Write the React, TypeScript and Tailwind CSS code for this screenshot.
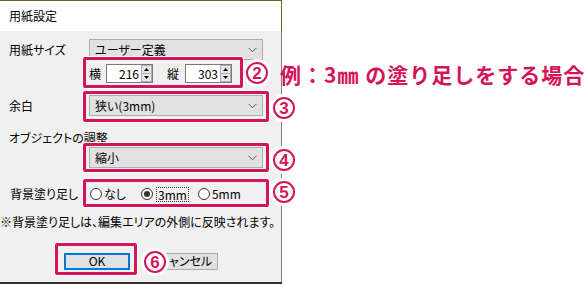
const MAG = "border-[#d4145a]";

function Chevron() {
  return (
    <svg width="9" height="6" viewBox="0 0 9 6">
      <polyline points="0.5,0.8 4.5,4.8 8.5,0.8" fill="none" stroke="#5a5a5a" strokeWidth="1" />
    </svg>
  );
}

function Select({ value }: { value: string }) {
  return (
    <div className="flex h-[21px] w-[174px] items-center justify-between border border-[#adadad] bg-[#e1e1e1] pl-[5px] pr-[5px]">
      <span className="leading-none">{value}</span>
      <Chevron />
    </div>
  );
}

function Spin({ value }: { value: string }) {
  return (
    <div className="flex h-[19px] w-[47px] border border-[#7a7a7a] bg-white">
      <div className="flex flex-1 items-center justify-end pr-[2px] leading-none">{value}</div>
      <div className="flex w-[11px] flex-col">
        <div className="flex flex-1 items-center justify-center border border-[#adadad] bg-[#e6e6e6]">
          <svg width="5" height="3" viewBox="0 0 5 3">
            <polygon points="2.5,0 5,3 0,3" fill="#000" />
          </svg>
        </div>
        <div className="flex flex-1 items-center justify-center border border-t-0 border-[#adadad] bg-[#e6e6e6]">
          <svg width="5" height="3" viewBox="0 0 5 3">
            <polygon points="0,0 5,0 2.5,3" fill="#000" />
          </svg>
        </div>
      </div>
    </div>
  );
}

function Radio({ checked }: { checked?: boolean }) {
  return (
    <span className="flex h-[12px] w-[12px] shrink-0 items-center justify-center rounded-full border border-[#333] bg-white">
      {checked && <span className="h-[6px] w-[6px] rounded-full bg-[#333]" />}
    </span>
  );
}

function Num({ n, cx, cy }: { n: string; cx: number; cy: number }) {
  return (
    <div
      className="absolute flex h-[28px] w-[28px] items-center justify-center rounded-full bg-white"
      style={{ left: cx - 14, top: cy - 14 }}
    >
      <div className={`flex h-[22px] w-[22px] items-center justify-center rounded-full border-[2.5px] ${MAG} font-['Liberation_Sans',sans-serif] text-[17px] font-bold leading-none text-[#d4145a]`}>
        {n}
      </div>
    </div>
  );
}

function Frame({ x, y, w, h }: { x: number; y: number; w: number; h: number }) {
  return (
    <div
      className={`absolute rounded-[2px] border-[3px] ${MAG} shadow-[0_0_0_1px_#fff]`}
      style={{ left: x, top: y, width: w, height: h }}
    />
  );
}

export default function App() {
  return (
    <div className="relative h-[284px] w-[587px] overflow-hidden bg-white font-['Noto_Sans_CJK_JP',sans-serif] text-[12px] text-black">
      <div className="flex h-[284px] w-[282px] flex-col whitespace-nowrap [font-feature-settings:'palt']">
        <div className="flex h-[31px] items-center border-r border-t border-[#6b6522] bg-white pl-[9px] text-[12px]">
          用紙設定
        </div>
        <div className="flex flex-1 flex-col border-r border-[#808080] bg-[#f0f0f0]">
          <div className="mt-[8px] flex items-center">
            <span className="w-[89px] pl-[9px]">用紙サイズ</span>
            <Select value="ユーザー定義" />
          </div>
          <div className="mt-[4px] flex h-[19px] items-center pl-[89px]">
            <span className="w-[17px]">横</span>
            <Spin value="216" />
            <span className="ml-[14px] w-[18px]">縦</span>
            <Spin value="303" />
          </div>
          <div className="mt-[12px] flex items-center">
            <span className="w-[89px] pl-[9px]">余白</span>
            <Select value="狭い(3mm)" />
          </div>
          <div className="mt-[14px] flex h-[16px] items-center pl-[9px]">オブジェクトの調整</div>
          <div className="mt-[1px] flex items-center pl-[89px]">
            <Select value="縮小" />
          </div>
          <div className="mt-[18px] flex h-[16px] items-center">
            <span className="w-[90px] pl-[10px]">背景塗り足し</span>
            <Radio />
            <span className="ml-[2px] w-[37px]">なし</span>
            <Radio checked />
            <span className="ml-[3px] border border-dotted border-[#333] px-[1px] leading-[13px]">3mm</span>
            <span className="ml-[9px]">
              <Radio />
            </span>
            <span className="ml-[2px]">5mm</span>
          </div>
          <div className="mt-[12px] flex h-[16px] items-center">※背景塗り足しは、編集エリアの外側に反映されます。</div>
          <div className="mt-[23px] flex h-[16px] items-center pl-[64px]">
            <div className="flex h-[17px] w-[66px] items-center justify-center border-2 border-[#0078d7] bg-[#e1e1e1]">OK</div>
            <div className="ml-[22px] flex h-[17px] w-[66px] items-center justify-center border border-[#adadad] bg-[#e1e1e1]">キャンセル</div>
          </div>
          <div className="flex-1" />
        </div>
        <div className="h-[2px] bg-[#3b3326]" />
      </div>

      <Frame x={83} y={57} w={160} h={31} />
      <Frame x={83} y={91} w={186} h={31} />
      <Frame x={83} y={143} w={186} h={29} />
      <Frame x={83} y={179} w={186} h={28} />
      <Frame x={55} y={243} w={82} h={32} />

      <Num n="2" cx={257} cy={73} />
      <Num n="3" cx={284} cy={108} />
      <Num n="4" cx={284} cy={160} />
      <Num n="5" cx={284} cy={192} />
      <Num n="6" cx={155} cy={262} />

      <div className="absolute left-[280px] top-[60px] text-[21px] font-bold leading-[28px] tracking-[1px] text-[#d4145a]">
        例：3㎜ の塗り足しをする場合
      </div>
    </div>
  );
}
